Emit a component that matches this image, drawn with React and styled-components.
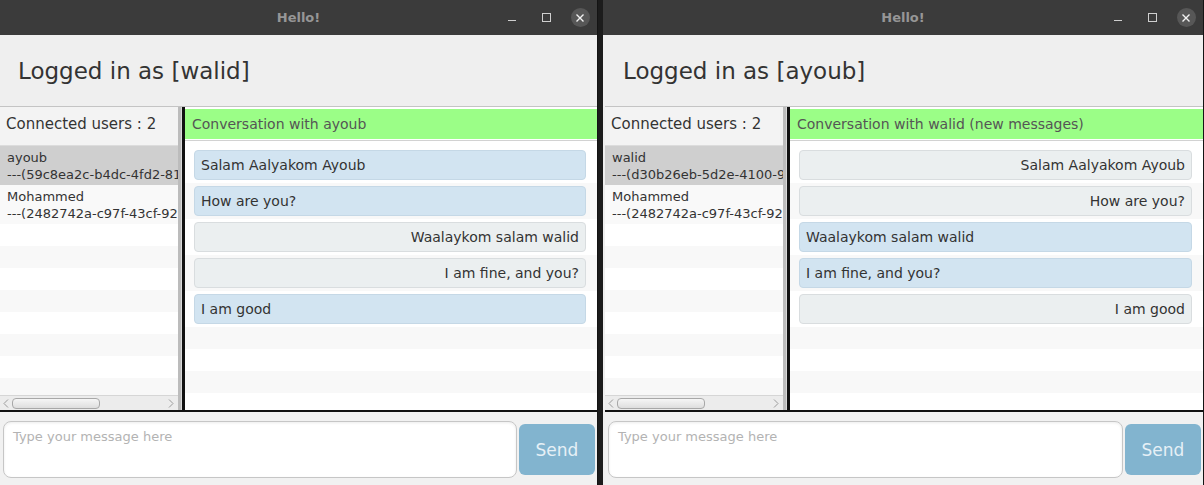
import styled, { createGlobalStyle } from "styled-components";

const GlobalStyle = createGlobalStyle`
  html, body {
    margin: 0;
    padding: 0;
    background: #1c1c1c;
  }
  body {
    font-family: "DejaVu Sans", "Noto Sans", sans-serif;
  }
`;

const windows = [
  {
    user: "walid",
    chatTitle: "Conversation with ayoub",
    width: 598,
    inset: 0,
    users: [
      { name: "ayoub", id: "---(59c8ea2c-b4dc-4fd2-81", selected: true },
      { name: "Mohammed", id: "---(2482742a-c97f-43cf-92" },
    ],
    messages: [
      { text: "Salam Aalyakom Ayoub", mine: true },
      { text: "How are you?", mine: true },
      { text: "Waalaykom salam walid", mine: false },
      { text: "I am fine, and you?", mine: false },
      { text: "I am good", mine: true },
    ],
  },
  {
    user: "ayoub",
    chatTitle: "Conversation with walid (new messages)",
    width: 601,
    inset: 2,
    users: [
      { name: "walid", id: "---(d30b26eb-5d2e-4100-9", selected: true },
      { name: "Mohammed", id: "---(2482742a-c97f-43cf-92" },
    ],
    messages: [
      { text: "Salam Aalyakom Ayoub", mine: false },
      { text: "How are you?", mine: false },
      { text: "Waalaykom salam walid", mine: true },
      { text: "I am fine, and you?", mine: true },
      { text: "I am good", mine: false },
    ],
  },
];

function ChatWindow({ win }) {
  return (
    <Frame $width={win.width}>
      <TitleBar>
        <span />
        <Title>Hello!</Title>
        <Controls>
          <Control>
            <MinLine />
          </Control>
          <Control>
            <MaxBox />
          </Control>
          <Control>
            <CloseDot>
              <svg width="8" height="8" viewBox="0 0 8 8">
                <path d="M0.5 0.5 L7.5 7.5 M7.5 0.5 L0.5 7.5" stroke="#f2f2f2" strokeWidth="1.4" />
              </svg>
            </CloseDot>
          </Control>
        </Controls>
      </TitleBar>
      <Body $inset={win.inset}>
        <Header>Logged in as [{win.user}]</Header>
        <Main>
          <UsersPane>
            <UsersHeader>Connected users : {win.users.length}</UsersHeader>
            <UsersList>
              {win.users.map((u, i) => (
                <UserCell key={u.id} $selected={u.selected} $odd={i % 2 === 1}>
                  <div>{u.name}</div>
                  <div>{u.id}</div>
                </UserCell>
              ))}
              {Array.from({ length: 9 }).map((_, i) => (
                <EmptyRow key={i} $odd={(i + win.users.length) % 2 === 1} />
              ))}
            </UsersList>
            <HScroll>
              <svg width="6" height="9" viewBox="0 0 6 9">
                <path d="M5 0.5 L1 4.5 L5 8.5" fill="none" stroke="#9a9a9a" strokeWidth="1" />
              </svg>
              <Thumb />
              <svg width="6" height="9" viewBox="0 0 6 9">
                <path d="M1 0.5 L5 4.5 L1 8.5" fill="none" stroke="#9a9a9a" strokeWidth="1" />
              </svg>
            </HScroll>
          </UsersPane>
          <Divider />
          <ChatPane>
            <ChatHead>
              <GreenBar>{win.chatTitle}</GreenBar>
            </ChatHead>
            <MessageList>
              {win.messages.map((m, i) => (
                <MessageCell key={i} $odd={i % 2 === 1}>
                  <Bubble $mine={m.mine}>{m.text}</Bubble>
                </MessageCell>
              ))}
              {Array.from({ length: 5 }).map((_, i) => (
                <EmptyRow key={i} $odd={(i + win.messages.length) % 2 === 1} />
              ))}
            </MessageList>
          </ChatPane>
        </Main>
        <InputBar>
          <MessageInput placeholder="Type your message here" />
          <SendButton>Send</SendButton>
        </InputBar>
      </Body>
    </Frame>
  );
}

export default function App() {
  return (
    <>
      <GlobalStyle />
      <Desktop>
        {windows.map((w) => (
          <ChatWindow key={w.user} win={w} />
        ))}
      </Desktop>
    </>
  );
}

const Desktop = styled.div`
  display: flex;
  gap: 5px;
  width: 1204px;
  height: 485px;
  overflow: hidden;
  background: #1c1c1c;
`;

const Frame = styled.div`
  display: flex;
  flex-direction: column;
  width: ${({ $width }) => $width}px;
  height: 485px;
  flex-shrink: 0;
  border-right: 1px solid #141414;
  box-sizing: border-box;
  background: #f0f0f0;
`;

const TitleBar = styled.div`
  display: grid;
  grid-template-columns: 1fr auto 1fr;
  align-items: center;
  height: 35px;
  background: #3b3b3b;
`;

const Title = styled.div`
  font-size: 13px;
  font-weight: 700;
  color: #969696;
`;

const Controls = styled.div`
  display: flex;
  justify-self: end;
`;

const Control = styled.div`
  display: flex;
  align-items: center;
  justify-content: center;
  width: 34px;
  height: 35px;
`;

const MinLine = styled.div`
  width: 8px;
  height: 1px;
  margin-top: 6px;
  background: #cfcfcf;
`;

const MaxBox = styled.div`
  width: 7px;
  height: 7px;
  border: 1px solid #cfcfcf;
`;

const CloseDot = styled.div`
  display: flex;
  align-items: center;
  justify-content: center;
  width: 19px;
  height: 19px;
  border-radius: 50%;
  background: #575757;
`;

const Body = styled.div`
  display: flex;
  flex-direction: column;
  flex: 1;
  min-height: 0;
  padding-left: ${({ $inset }) => $inset}px;
  background: #efefef;
`;

const Header = styled.div`
  display: flex;
  align-items: center;
  height: 71px;
  padding-left: 18px;
  font-size: 23px;
  color: #333;
`;

const Main = styled.div`
  display: flex;
  height: 303px;
  border-top: 1px solid #c4c4c4;
`;

const UsersPane = styled.div`
  display: flex;
  flex-direction: column;
  width: 178px;
  flex-shrink: 0;
  background: #fff;
`;

const UsersHeader = styled.div`
  display: flex;
  align-items: center;
  height: 39px;
  box-sizing: border-box;
  padding: 0 0 5px 6px;
  font-size: 15px;
  color: #333;
  background: #f3f3f3;
  border-bottom: 1px solid #dcdcdc;
`;

const UsersList = styled.div`
  flex: 1;
  min-height: 0;
  overflow: hidden;
`;

const UserCell = styled.div`
  height: 39px;
  box-sizing: border-box;
  padding: 3px 0 0 7px;
  font-size: 13px;
  line-height: 17px;
  color: #333;
  white-space: nowrap;
  overflow: hidden;
  background: ${({ $selected, $odd }) => ($selected ? "#cfcfcf" : $odd ? "#f9f9f9" : "#fff")};
`;

const EmptyRow = styled.div`
  height: 22px;
  background: ${({ $odd }) => ($odd ? "#f8f8f8" : "#fff")};
`;

const HScroll = styled.div`
  display: flex;
  align-items: center;
  gap: 3px;
  height: 14px;
  padding: 0 4px 0 3px;
  background: #ececec;
  border-top: 1px solid #d6d6d6;
  & > svg:last-child {
    margin-left: auto;
  }
`;

const Thumb = styled.div`
  width: 86px;
  height: 9px;
  border: 1px solid #a8a8a8;
  border-radius: 4px;
  background: linear-gradient(#f6f6f6, #dedede);
`;

const Divider = styled.div`
  width: 7px;
  flex-shrink: 0;
  background: linear-gradient(to right, #bcbcbc 0 3px, #dadada 3px 4px, #111 4px 7px);
`;

const ChatPane = styled.div`
  display: flex;
  flex-direction: column;
  flex: 1;
  min-width: 0;
  background: #fff;
`;

const ChatHead = styled.div`
  padding: 2px 0 1px;
  border-bottom: 1px solid #d2d2d2;
`;

const GreenBar = styled.div`
  display: flex;
  align-items: center;
  height: 30px;
  padding-left: 7px;
  font-size: 14px;
  color: #555;
  background: #9bfe87;
`;

const MessageList = styled.div`
  flex: 1;
  min-height: 0;
  overflow: hidden;
  padding-top: 6px;
`;

const MessageCell = styled.div`
  height: 36px;
  box-sizing: border-box;
  padding: 3px 11px 3px 9px;
  background: ${({ $odd }) => ($odd ? "#f8f8f8" : "#fff")};
`;

const Bubble = styled.div`
  display: flex;
  align-items: center;
  justify-content: ${({ $mine }) => ($mine ? "flex-start" : "flex-end")};
  height: 30px;
  box-sizing: border-box;
  padding: 0 6px;
  border-radius: 4px;
  font-size: 14px;
  color: #333;
  background: ${({ $mine }) => ($mine ? "#d2e4f1" : "#ebeff0")};
  border: 1px solid ${({ $mine }) => ($mine ? "#c5d8e6" : "#d9dddf")};
`;

const InputBar = styled.div`
  display: flex;
  align-items: center;
  gap: 2px;
  flex: 1;
  padding: 9px 2px 7px 3px;
  border-top: 2px solid #111;
  background: #f1f1f1;
`;

const MessageInput = styled.textarea`
  flex: 1;
  height: 57px;
  box-sizing: border-box;
  padding: 7px 9px;
  resize: none;
  border: 1px solid #c6c6c6;
  border-radius: 8px;
  background: #fff;
  box-shadow: inset 0 1px 3px rgba(0, 0, 0, 0.08);
  font-family: "DejaVu Sans", sans-serif;
  font-size: 13px;
  outline: none;
  &::placeholder {
    color: #b3b3b3;
  }
`;

const SendButton = styled.button`
  width: 76px;
  height: 51px;
  border: none;
  border-radius: 6px;
  background: #82b4cf;
  color: #e6f0f6;
  font-family: "DejaVu Sans", sans-serif;
  font-size: 17px;
`;
